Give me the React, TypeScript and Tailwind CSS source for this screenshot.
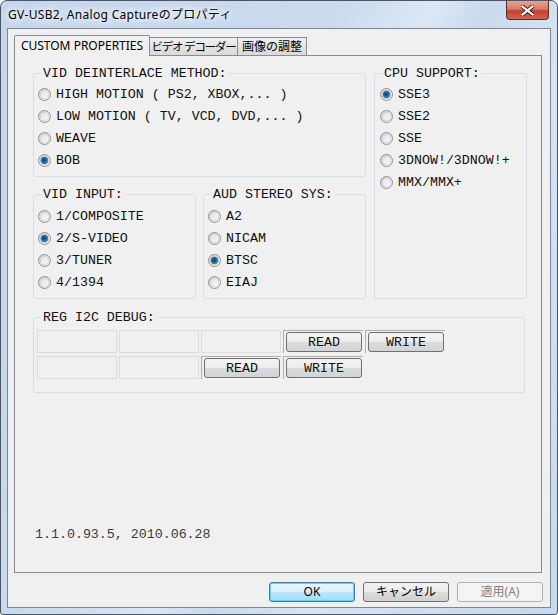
import React from "react";

const mono = "font-['Liberation_Mono','Courier_New',monospace]";
const ui = "font-['Noto_Sans','Noto_Sans_CJK_JP',sans-serif]";

function Radio({ checked }: { checked?: boolean }) {
  return (
    <svg width="13" height="13" viewBox="0 0 13 13" className="shrink-0">
      <defs>
        <linearGradient id="rOuter" x1="0" y1="0" x2="1" y2="1">
          <stop offset="0" stopColor="#cfcfcf" />
          <stop offset="1" stopColor="#fdfdfd" />
        </linearGradient>
        <linearGradient id="rInner" x1="0" y1="0" x2="1" y2="1">
          <stop offset="0" stopColor="#e2e2e2" />
          <stop offset="1" stopColor="#fafafa" />
        </linearGradient>
        <radialGradient id="rDot" cx="0.45" cy="0.45" r="0.6">
          <stop offset="0" stopColor="#0d3e62" />
          <stop offset="0.55" stopColor="#1a6aa5" />
          <stop offset="1" stopColor="#62b6ea" />
        </radialGradient>
      </defs>
      <circle cx="6.5" cy="6.5" r="6" fill="url(#rOuter)" stroke="#8f9193" strokeWidth="1" />
      <circle cx="6.5" cy="6.5" r="4.2" fill="url(#rInner)" stroke="#c4c4c4" strokeWidth="0.6" />
      {checked && <circle cx="6.5" cy="6.5" r="3.4" fill="url(#rDot)" stroke="#2a4d68" strokeWidth="0.6" />}
    </svg>
  );
}

function RadioRow({ label, checked }: { label: string; checked?: boolean }) {
  return (
    <div className="flex items-center h-[22px] gap-[5px]">
      <Radio checked={checked} />
      <span className={`${mono} text-[13.3px] leading-[15px] text-[#111] whitespace-pre`}>{label}</span>
    </div>
  );
}

function Group({
  title,
  className,
  children,
}: {
  title: string;
  className?: string;
  children: React.ReactNode;
}) {
  return (
    <div className={`relative border border-[#d5dfe5] rounded-[3px] ${className ?? ""}`}>
      <span
        className={`absolute -top-[8px] left-[7px] px-[2px] bg-[#f0f0f0] ${mono} text-[13.3px] leading-[15px] text-[#111] whitespace-pre`}
      >
        {title}
      </span>
      {children}
    </div>
  );
}

function EditCell() {
  return <div className="w-[80px] h-[23px] border border-[#dcdcdc] bg-[#f0f0f0]" />;
}

function BtnCell({ label }: { label: string }) {
  return (
    <div className="w-[80px] h-[23px] border-t border-l border-[#b0b0b0] pl-[2px] pt-[1px]">
      <div className="w-[76px] h-[20px] border border-[#707070] rounded-[3px] bg-[linear-gradient(#f3f3f3_0%,#ececec_48%,#dbdbdb_52%,#d0d4d9_100%)] flex items-center justify-center">
        <span className={`${mono} text-[13.3px] leading-[15px] text-[#111]`}>{label}</span>
      </div>
    </div>
  );
}

function DlgButton({
  label,
  variant,
}: {
  label: string;
  variant?: "default" | "disabled";
}) {
  const base = "w-[86px] h-[20px] rounded-[3px] flex items-center justify-center text-[12px] leading-none";
  if (variant === "default")
    return (
      <div
        className={`${base} border border-[#3c7fb1] shadow-[inset_0_0_0_1px_#5fd2fa] bg-[linear-gradient(#eaf6fd_0%,#d9f0fc_48%,#bee6fd_52%,#a7d9f5_100%)] text-black`}
      >
        <span className={ui}>{label}</span>
      </div>
    );
  if (variant === "disabled")
    return (
      <div className={`${base} border border-[#adb2b5] bg-[#f4f4f4] text-[#838383]`}>
        <span className={ui}>{label}</span>
      </div>
    );
  return (
    <div
      className={`${base} border border-[#707070] bg-[linear-gradient(#f2f2f2_0%,#ebebeb_48%,#dddddd_52%,#cfcfcf_100%)] text-black`}
    >
      <span className={ui}>{label}</span>
    </div>
  );
}

export default function App() {
  return (
    <div className="w-[558px] h-[615px] relative overflow-hidden rounded-t-[7px] rounded-b-[3px] border border-[#4a5664] bg-[linear-gradient(115deg,#c4d6ec_0%,#cadbee_40%,#dbe7f4_52%,#c9daee_58%,#d6e4f3_70%,#c8d9ed_100%)] flex flex-col">
      {/* title bar */}
      <div className="h-[27px] shrink-0 flex items-start relative">
        <span
          className={`${ui} text-[12px] leading-[16px] text-black mt-[6px] ml-[7px] tracking-[0.3px] [text-shadow:0_0_6px_#fff,0_0_10px_#fff,0_0_12px_#fff]`}
        >
          GV-USB2, Analog Captureのプロパティ
        </span>
        <div className="absolute right-[8px] top-0 w-[43px] h-[19px] rounded-b-[4px] border border-t-0 border-[#5b2a22] bg-[linear-gradient(#e8a493_0%,#d77a64_45%,#c2412c_55%,#d2644e_100%)] flex items-center justify-center">
          <svg width="13" height="11" viewBox="0 0 13 11">
            <path
              d="M1.5 1.5 L11.5 9.5 M11.5 1.5 L1.5 9.5"
              stroke="#3a1c18"
              strokeWidth="4"
              strokeLinecap="square"
            />
            <path
              d="M1.5 1.5 L11.5 9.5 M11.5 1.5 L1.5 9.5"
              stroke="#ffffff"
              strokeWidth="2.2"
              strokeLinecap="square"
            />
          </svg>
        </div>
      </div>

      {/* client area */}
      <div className="mx-[6px] h-[580px] border border-[#7c8796] bg-[#f0f0f0] flex flex-col px-[6px]">
        {/* tabs */}
        <div className="flex items-end h-[20px] mt-[6px] relative z-10">
          <div className="w-[136px] h-[21px] border border-b-0 border-[#898c95] bg-[#f0f0f0] rounded-t-[2px] flex items-center justify-center -mb-px">
            <span className={`${ui} text-[12px] leading-none text-black`}>CUSTOM PROPERTIES</span>
          </div>
          <div className="w-[88px] h-[18px] border border-l-0 border-b-0 border-[#898c95] bg-[linear-gradient(#f2f2f2,#e3e3e3_50%,#d9d9d9)] flex items-center justify-center overflow-hidden">
            <span className={`${ui} text-[11.5px] leading-none text-black tracking-[-1.2px] whitespace-pre`}>ビデオ デコーダー</span>
          </div>
          <div className="w-[69px] h-[18px] border border-l-0 border-b-0 border-[#898c95] bg-[linear-gradient(#f2f2f2,#e3e3e3_50%,#d9d9d9)] flex items-center justify-center overflow-hidden">
            <span className={`${ui} text-[12px] leading-none text-black whitespace-nowrap`}>画像の調整</span>
          </div>
        </div>

        {/* panel */}
        <div className="w-[528px] h-[518px] border border-[#898c95] bg-[#f0f0f0] flex flex-col pl-[18px] pt-[17px]">
          <div className="flex gap-[8px]">
            <div className="flex flex-col gap-[17px]">
              <Group title="VID DEINTERLACE METHOD:" className="w-[333px] h-[104px] pt-[9px] pl-[4px]">
                <RadioRow label="HIGH MOTION ( PS2, XBOX,... )" />
                <RadioRow label="LOW MOTION ( TV, VCD, DVD,... )" />
                <RadioRow label="WEAVE" />
                <RadioRow label="BOB" checked />
              </Group>
              <div className="flex gap-[7px]">
                <Group title="VID INPUT:" className="w-[163px] h-[105px] pt-[10px] pl-[4px]">
                  <RadioRow label="1/COMPOSITE" />
                  <RadioRow label="2/S-VIDEO" checked />
                  <RadioRow label="3/TUNER" />
                  <RadioRow label="4/1394" />
                </Group>
                <Group title="AUD STEREO SYS:" className="w-[163px] h-[105px] pt-[10px] pl-[4px]">
                  <RadioRow label="A2" />
                  <RadioRow label="NICAM" />
                  <RadioRow label="BTSC" checked />
                  <RadioRow label="EIAJ" />
                </Group>
              </div>
            </div>
            <Group title="CPU SUPPORT:" className="w-[153px] h-[226px] pt-[9px] pl-[5px]">
              <RadioRow label="SSE3" checked />
              <RadioRow label="SSE2" />
              <RadioRow label="SSE" />
              <RadioRow label="3DNOW!/3DNOW!+" />
              <RadioRow label="MMX/MMX+" />
            </Group>
          </div>

          <Group title="REG I2C DEBUG:" className="w-[492px] h-[76px] mt-[18px] pt-[12px] pl-[3px]">
            <div className="flex flex-col gap-[3px]">
              <div className="flex gap-[2px]">
                <EditCell />
                <EditCell />
                <EditCell />
                <BtnCell label="READ" />
                <BtnCell label="WRITE" />
              </div>
              <div className="flex gap-[2px]">
                <EditCell />
                <EditCell />
                <BtnCell label="READ" />
                <BtnCell label="WRITE" />
              </div>
            </div>
          </Group>

          <div className={`mt-auto mb-[30px] ml-[2px] ${mono} text-[13.3px] leading-[15px] text-[#3b3b3b]`}>
            1.1.0.93.5, 2010.06.28
          </div>
        </div>

        {/* buttons */}
        <div className="flex justify-end gap-[8px] mt-[9px] pr-[1px]">
          <DlgButton label="OK" variant="default" />
          <DlgButton label="キャンセル" />
          <DlgButton label="適用(A)" variant="disabled" />
        </div>
      </div>
    </div>
  );
}
